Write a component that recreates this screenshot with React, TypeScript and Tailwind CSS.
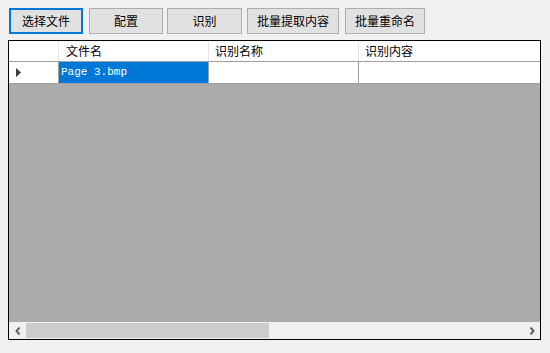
import React from 'react';

const buttons = [
  { label: '选择文件', cls: 'w-[74px]', active: true },
  { label: '配置', cls: 'w-[74px] ml-[6px]' },
  { label: '识别', cls: 'w-[75px] ml-[4px]' },
  { label: '批量提取内容', cls: 'w-[92px] ml-[5px]' },
  { label: '批量重命名', cls: 'w-[80px] ml-[6px]' },
];

const cjk = "font-['Microsoft_YaHei','Noto_Sans_CJK_SC',sans-serif]";

export default function App() {
  return (
    <div className={`w-[550px] h-[353px] bg-[#f0f0f0] ${cjk} text-[12px] text-black overflow-hidden`}>
      <div className="flex pl-[9px] pt-[8px]">
        {buttons.map((b, i) => (
          <button
            key={i}
            className={`${b.cls} h-[26px] bg-[#e1e1e1] flex items-center justify-center leading-none ${
              b.active ? 'border-2 border-[#0078d7]' : 'border border-[#adadad]'
            }`}
          >
            {b.label}
          </button>
        ))}
      </div>

      <div className="ml-[8px] mt-[6px] w-[533px] h-[300px] border border-black flex flex-col">
        {/* header */}
        <div className="flex h-[21px] bg-white border-b border-[#a0a0a0] shrink-0">
          <div className="w-[50px] border-r border-[#e5e5e5]" />
          <div className="w-[150px] border-r border-[#e5e5e5] pl-[7px] flex items-center">文件名</div>
          <div className="w-[150px] border-r border-[#e5e5e5] pl-[6px] flex items-center">识别名称</div>
          <div className="flex-1 pl-[6px] flex items-center">识别内容</div>
        </div>
        {/* row */}
        <div className="flex h-[22px] bg-white border-b border-[#a0a0a0] shrink-0">
          <div className="w-[50px] border-r border-[#a0a0a0] flex items-center pl-[7px]">
            <svg width="5" height="9" viewBox="0 0 5 9">
              <path d="M0 0 L5 4.5 L0 9 Z" fill="#3c3c3c" />
            </svg>
          </div>
          <div className="w-[150px] bg-[#0078d7] text-white border-r border-[#a0a0a0] pl-[2px] flex items-center font-['NSimSun','Liberation_Mono',monospace] text-[11px]">
            Page 3.bmp
          </div>
          <div className="w-[150px] border-r border-[#a0a0a0]" />
          <div className="flex-1" />
        </div>
        {/* empty area */}
        <div className="flex-1 bg-[#ababab]" />
        {/* horizontal scrollbar */}
        <div className="h-[17px] bg-[#f0f0f0] flex items-center shrink-0">
          <div className="w-[17px] h-[17px] flex items-center justify-center">
            <svg width="6" height="8" viewBox="0 0 6 8">
              <path d="M4.5 0.5 L1.5 4 L4.5 7.5" stroke="#606060" strokeWidth="2" fill="none" />
            </svg>
          </div>
          <div className="w-[243px] h-[15px] bg-[#cdcdcd]" />
          <div className="flex-1" />
          <div className="w-[17px] h-[17px] flex items-center justify-center">
            <svg width="6" height="8" viewBox="0 0 6 8">
              <path d="M1.5 0.5 L4.5 4 L1.5 7.5" stroke="#606060" strokeWidth="2" fill="none" />
            </svg>
          </div>
        </div>
      </div>
    </div>
  );
}
